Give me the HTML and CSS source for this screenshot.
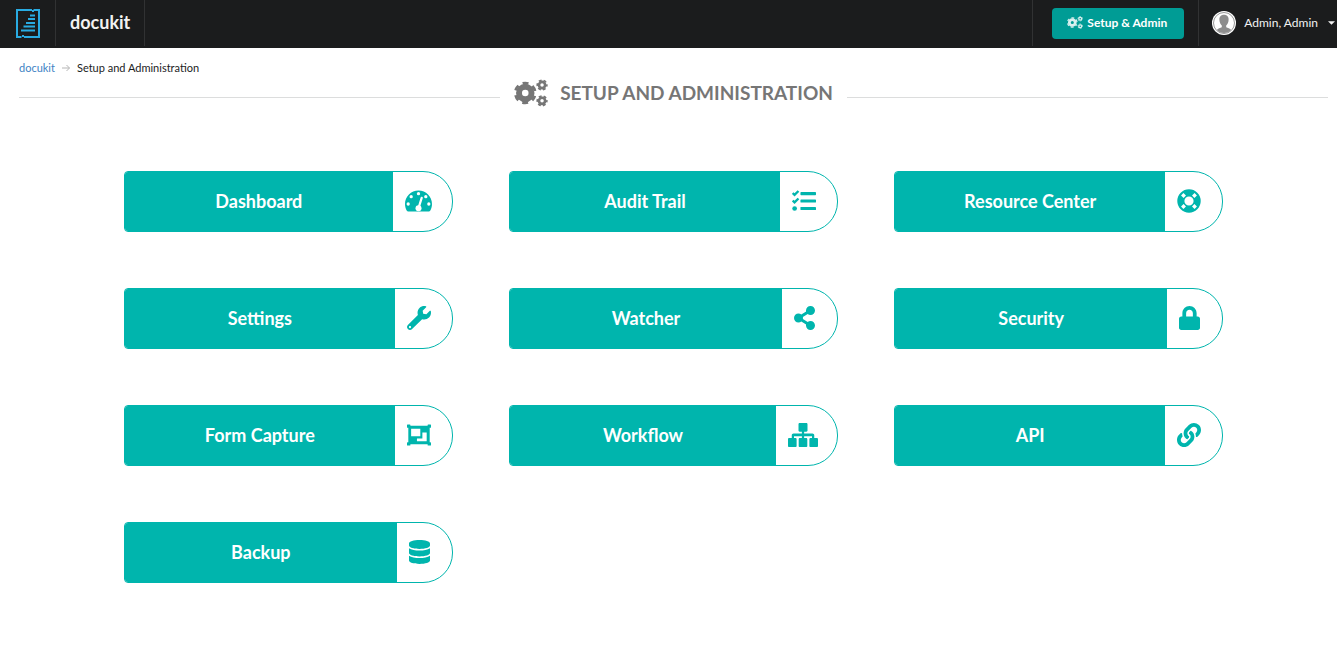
FILE: index.html
```html
<!DOCTYPE html>
<html lang="en">
<head>
<meta charset="utf-8">
<title>docukit - Setup and Administration</title>
<link rel="stylesheet" href="styles.css">
</head>
<body>
<svg class="sprite" aria-hidden="true">
  <symbol id="cogs" viewBox="0 0 640 512">
    <g fill="none" stroke="currentColor">
      <circle cx="212" cy="256" r="118" stroke-width="112"/>
      <circle cx="212" cy="256" r="188" stroke-width="50" stroke-dasharray="108 88.870" stroke-dashoffset="54" transform="rotate(30 212 256)"/>
      <circle cx="528" cy="106" r="58" stroke-width="50"/>
      <circle cx="528" cy="106" r="90" stroke-width="32" stroke-dasharray="54 40.250" stroke-dashoffset="27"/>
      <circle cx="528" cy="404" r="58" stroke-width="50"/>
      <circle cx="528" cy="404" r="90" stroke-width="32" stroke-dasharray="54 40.250" stroke-dashoffset="27"/>
    </g>
  </symbol>
</svg>

<header class="topbar">
  <a class="logo" href="#" aria-label="Home">
    <svg viewBox="0 0 24 29" width="24" height="29" fill="none" stroke="#29abe2" stroke-width="2">
      <path d="M16 1H1V28H5.500M18.500 2V1H23V28H8M7 28V26M17 1V3"/>
      <path d="M14 6.500H19M12 10H19M10 14H19M7.500 17.500H19M5 21.500H19" stroke-width="2"/>
    </svg>
  </a>
  <a class="brand" href="#">docukit</a>
  <div class="setup">
    <button class="setup-button" type="button">
      <svg class="setup-icon"><use href="#cogs"/></svg>Setup &amp; Admin
    </button>
  </div>
  <button class="account" type="button">
    <svg class="avatar" viewBox="0 0 24 24">
      <circle cx="12" cy="12" r="12" fill="#fff"/>
      <circle cx="12" cy="12" r="10.500" fill="none" stroke="#999" stroke-width="1"/>
      <path d="M12 3.800C8.800 3.800 7.200 6 7.400 9C7.500 11.500 8.600 13.500 9.800 14.600V16.200C8.300 17 6 17.300 4.800 19C8.500 23 15.500 23 19.200 19C18 17.300 15.700 17 14.200 16.200V14.600C15.400 13.500 16.500 11.500 16.600 9C16.800 6 15.200 3.800 12 3.800Z" fill="#8d8d8d"/>
    </svg>
    <span>Admin, Admin</span>
    <svg class="caret" viewBox="0 0 8 4"><path d="M0 0H8L4 4Z" fill="currentColor"/></svg>
  </button>
</header>

<main class="page">
  <nav class="breadcrumb" aria-label="Breadcrumb">
    <a href="#">docukit</a>
    <svg class="arrow" viewBox="0 0 8 8" fill="none" stroke="#b5b5b5"><path d="M0 4H7.500M4.500 1L7.500 4L4.500 7"/></svg>
    <span>Setup and Administration</span>
  </nav>

  <div class="divider">
    <svg class="divider-icon"><use href="#cogs"/></svg>
    <h1>Setup and Administration</h1>
  </div>

  <div class="tiles">
    <a class="tile" href="#"><span class="label">Dashboard</span><span class="icon icon-large">
      <svg width="27" height="24" viewBox="0 0 576 512"><path fill="currentColor" d="M288 32C128.940 32 0 160.940 0 320c0 52.800 14.250 102.260 39.060 144.800 5.610 9.620 16.300 15.200 27.440 15.200h443c11.140 0 21.830-5.580 27.440-15.200C561.750 422.260 576 372.800 576 320c0-159.060-128.940-288-288-288z"/><g fill="#fff"><circle cx="288" cy="100" r="35"/><circle cx="132" cy="164" r="35"/><circle cx="68" cy="320" r="35"/><circle cx="508" cy="320" r="35"/><circle cx="444" cy="164" r="35"/><circle cx="288" cy="410" r="64"/></g><path d="M294 390L356 190" stroke="#fff" stroke-width="48" stroke-linecap="round"/></svg></span></a>
    <a class="tile" href="#"><span class="label">Audit Trail</span><span class="icon icon-medium">
      <svg width="24" height="24" viewBox="0 0 512 512" fill="currentColor"><rect x="180" y="64" width="332" height="68" rx="14"/><rect x="180" y="222" width="332" height="68" rx="14"/><rect x="180" y="382" width="332" height="68" rx="14"/><circle cx="56" cy="416" r="50"/><path d="M14 88L54 126L138 42M14 248L54 286L138 202" fill="none" stroke="currentColor" stroke-width="50"/></svg></span></a>
    <a class="tile" href="#"><span class="label">Resource Center</span><span class="icon icon-medium">
      <svg width="24" height="24" viewBox="0 0 512 512"><circle cx="256" cy="256" r="174" fill="none" stroke="currentColor" stroke-width="152"/><path d="M112 112L166 166M400 112L346 166M112 400L166 346M400 400L346 346" stroke="#fff" stroke-width="72"/></svg></span></a>

    <a class="tile" href="#"><span class="label">Settings</span><span class="icon icon-medium">
      <svg width="24" height="24" viewBox="0 0 512 512" fill="currentColor"><path d="M507.730 109.100c-2.240-9.030-13.540-12.090-20.120-5.510l-74.360 74.360-67.880-11.310-11.310-67.880 74.360-74.360c6.620-6.620 3.430-17.900-5.660-20.160-47.380-11.740-99.550.910-136.580 37.930-39.640 39.640-50.550 97.100-34.050 147.200L18.740 402.760c-24.990 24.990-24.990 65.510 0 90.500 24.990 24.990 65.510 24.990 90.500 0l213.210-213.210c50.120 16.710 107.470 5.680 147.370-34.220 37.070-37.070 49.700-89.320 37.910-136.730zM64 472c-13.250 0-24-10.750-24-24 0-13.260 10.750-24 24-24s24 10.740 24 24c0 13.250-10.750 24-24 24z"/></svg></span></a>
    <a class="tile" href="#"><span class="label">Watcher</span><span class="icon icon-small">
      <svg width="21" height="24" viewBox="0 0 448 512" fill="currentColor"><path d="M352 320c-22.608 0-43.387 7.819-59.790 20.895l-102.486-64.054a96.551 96.551 0 0 0 0-41.683l102.486-64.054C308.613 184.181 329.392 192 352 192c53.019 0 96-42.981 96-96S405.019 0 352 0s-96 42.981-96 96c0 7.158.790 14.130 2.276 20.841L155.790 180.895C139.387 167.819 118.608 160 96 160c-53.019 0-96 42.981-96 96s42.981 96 96 96c22.608 0 43.387-7.819 59.790-20.895l102.486 64.054A96.301 96.301 0 0 0 256 416c0 53.019 42.981 96 96 96s96-42.981 96-96-42.981-96-96-96z"/></svg></span></a>
    <a class="tile" href="#"><span class="label">Security</span><span class="icon icon-small">
      <svg width="21" height="24" viewBox="0 0 448 512" fill="currentColor"><path d="M400 224h-24v-72C376 68.200 307.800 0 224 0S72 68.200 72 152v72H48c-26.500 0-48 21.500-48 48v192c0 26.500 21.500 48 48 48h352c26.500 0 48-21.500 48-48V272c0-26.500-21.500-48-48-48zm-104 0H152v-72c0-39.700 32.300-72 72-72s72 32.300 72 72v72z"/></svg></span></a>

    <a class="tile" href="#"><span class="label">Form Capture</span><span class="icon icon-medium">
      <svg width="24" height="24" viewBox="0 0 512 512" fill="currentColor"><path fill-rule="evenodd" d="M28 58H484V454H28ZM88 124V284H284V124ZM328 202V328H212V388H420V202Z"/><rect x="0" y="32" width="72" height="68" rx="12"/><rect x="440" y="32" width="72" height="68" rx="12"/><rect x="0" y="412" width="72" height="68" rx="12"/><rect x="440" y="412" width="72" height="68" rx="12"/></svg></span></a>
    <a class="tile" href="#"><span class="label">Workflow</span><span class="icon icon-wide">
      <svg width="30" height="24" viewBox="0 0 640 512" fill="currentColor"><path d="M160 320H24c-13 0-24 11-24 24v144c0 13 11 24 24 24h136c13 0 24-11 24-24V344c0-13-11-24-24-24zM128 284h168v36h48v-36h168v36h48v-57.590c0-21.170-17.230-38.410-38.410-38.410H344v-40h48c13 0 24-11 24-24V24c0-13-11-24-24-24H248c-13 0-24 11-24 24v136c0 13 11 24 24 24h48v40H118.410C97.230 224 80 241.230 80 262.410V320h48zM388 320H252c-13 0-24 11-24 24v144c0 13 11 24 24 24h136c13 0 24-11 24-24V344c0-13-11-24-24-24zM616 320H480c-13 0-24 11-24 24v144c0 13 11 24 24 24h136c13 0 24-11 24-24V344c0-13-11-24-24-24z"/></svg></span></a>
    <a class="tile" href="#"><span class="label">API</span><span class="icon icon-medium">
      <svg width="24" height="24" viewBox="0 0 512 512" fill="currentColor"><path d="M326.612 185.391c59.747 59.809 58.927 155.698.360 214.590-.110.120-.240.250-.360.370l-67.200 67.200c-59.270 59.270-155.699 59.262-214.960 0-59.270-59.260-59.270-155.700 0-214.960l37.106-37.106c9.840-9.840 26.786-3.300 27.294 10.606.648 17.722 3.826 35.527 9.690 52.721 1.986 5.822.567 12.262-3.783 16.612l-13.087 13.087c-28.026 28.026-28.905 73.660-1.155 101.960 28.024 28.579 74.086 28.749 102.325.510l67.200-67.190c28.191-28.191 28.073-73.757 0-101.830-3.701-3.694-7.429-6.564-10.341-8.569a16.037 16.037 0 0 1-6.947-12.606c-.396-10.567 3.348-21.456 11.698-29.806l21.054-21.055c5.521-5.521 14.182-6.199 20.584-1.731a152.482 152.482 0 0 1 20.522 17.197zM467.547 44.449c-59.261-59.262-155.690-59.270-214.960 0l-67.200 67.200c-.120.120-.250.250-.360.370-58.566 58.892-59.387 154.781.360 214.590a152.454 152.454 0 0 0 20.521 17.196c6.402 4.468 15.064 3.789 20.584-1.731l21.054-21.055c8.350-8.350 12.094-19.239 11.698-29.806a16.037 16.037 0 0 0-6.947-12.606c-2.912-2.005-6.640-4.875-10.341-8.569-28.073-28.073-28.191-73.639 0-101.830l67.200-67.190c28.239-28.239 74.300-28.069 102.325.510 27.750 28.300 26.872 73.934-1.155 101.960l-13.087 13.087c-4.350 4.350-5.769 10.790-3.783 16.612 5.864 17.194 9.042 34.999 9.690 52.721.509 13.906 17.454 20.446 27.294 10.606l37.106-37.106c59.271-59.259 59.271-155.699.001-214.959z"/></svg></span></a>

    <a class="tile" href="#"><span class="label">Backup</span><span class="icon icon-small">
      <svg width="21" height="24" viewBox="0 0 448 512" fill="currentColor"><path d="M448 73.143v45.714C448 159.143 347.667 192 224 192S0 159.143 0 118.857V73.143C0 32.857 100.333 0 224 0s224 32.857 224 73.143zM448 176v102.857C448 319.143 347.667 352 224 352S0 319.143 0 278.857V176c48.125 33.143 136.208 48.572 224 48.572S399.874 209.143 448 176zm0 160v102.857C448 479.143 347.667 512 224 512S0 479.143 0 438.857V336c48.125 33.143 136.208 48.572 224 48.572S399.874 369.143 448 336z"/></svg></span></a>
  </div>
</main>
</body>
</html>
```
FILE: styles.css
```css
* { box-sizing: border-box; }

body {
  margin: 0;
  background: #fff;
  color: #1b1c1d;
  font-family: Lato, "Liberation Sans", sans-serif;
  font-size: 12px;
}

a { text-decoration: none; }
button { font: inherit; border: 0; cursor: pointer; }
svg { display: block; flex: none; }
.sprite { position: absolute; width: 0; height: 0; }

.topbar {
  display: flex;
  height: 48px;
  padding-bottom: 2px;
  background: #1b1c1d;
  color: #fff;
}

.logo {
  display: flex;
  align-items: center;
  padding: 0 15px 0 16px;
  border-right: 1px solid #313233;
}

.brand {
  display: flex;
  align-items: center;
  padding: 0 14px 2px;
  border-right: 1px solid #313233;
  color: #f2f2f2;
  font-size: 18px;
  font-weight: 700;
}

.setup {
  display: flex;
  align-items: center;
  margin-left: auto;
  padding: 0 14px 0 19px;
  border-left: 1px solid #313233;
}

.setup-button {
  display: flex;
  align-items: center;
  gap: 4px;
  height: 31px;
  padding: 0 17px 2px 15px;
  border-radius: 4px;
  background: #009c95;
  color: #fff;
  font-weight: 700;
}

.setup-icon { width: 16px; height: 13px; opacity: 0.85; }

.account {
  display: flex;
  align-items: center;
  padding: 0 2px 0 13px;
  border-left: 1px solid #313233;
  background: none;
  color: #f2f2f2;
}

.account span { padding-bottom: 2px; }
.avatar { width: 24px; height: 24px; margin-right: 8px; }
.caret { width: 7px; height: 4px; margin-left: 10px; }

.page { padding: 12px 9px 40px 19px; }

.breadcrumb {
  display: flex;
  align-items: center;
  gap: 7px;
  font-size: 11px;
  line-height: 16px;
}

.breadcrumb a { color: #4183c4; }
.arrow { width: 8px; height: 8px; }

.divider {
  display: flex;
  align-items: center;
  margin: 3px 0 64px;
  color: #767676;
}

.divider::before,
.divider::after {
  content: "";
  flex: 1;
  height: 1px;
  margin-top: 8px;
  background: #dcdddd;
}

.divider::before { margin-right: 14px; }
.divider::after { margin-left: 14px; }
.divider-icon { width: 34px; height: 28px; margin-right: 12px; }

h1 {
  margin: 0;
  font-size: 19px;
  font-weight: 700;
  line-height: 28px;
  text-transform: uppercase;
}

.tiles {
  display: grid;
  grid-template-columns: repeat(3, 1fr);
  gap: 56px;
  padding: 0 8%;
}

.tile {
  display: flex;
  height: 61px;
  overflow: hidden;
  border: 1px solid #00b5ad;
  border-radius: 4px 30px 30px 4px;
  color: #00b5ad;
}

.label {
  display: flex;
  flex: 1;
  align-items: center;
  justify-content: center;
  padding-bottom: 2px;
  background: #00b5ad;
  color: #fff;
  font-size: 18px;
  font-weight: 700;
}

.icon {
  display: flex;
  align-items: center;
  padding: 0 0 1px 12px;
}

.icon-small { width: 55px; }
.icon-medium { width: 57px; }
.icon-large { width: 59px; }
.icon-wide { width: 61px; }
```
